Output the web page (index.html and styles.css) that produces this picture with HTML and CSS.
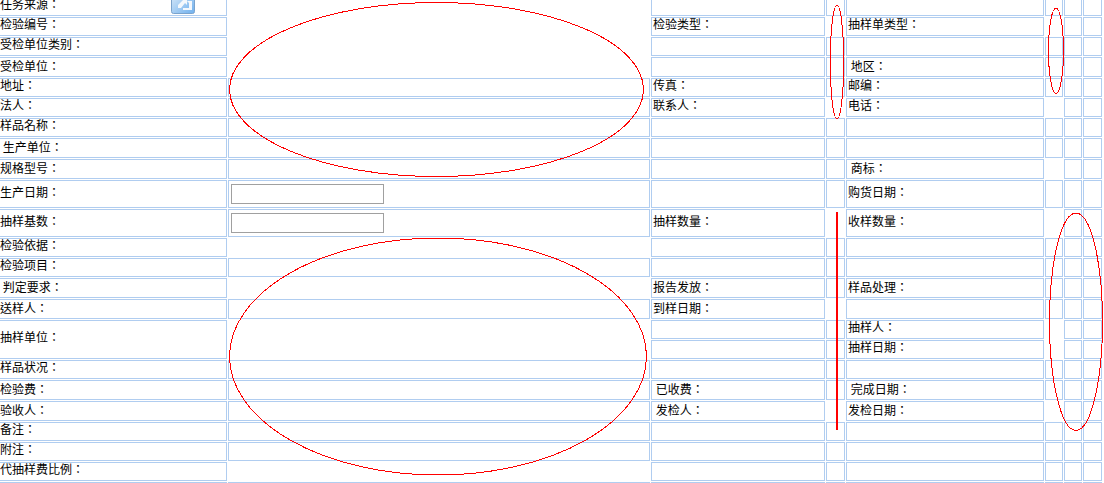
FILE: index.html
```html
<!DOCTYPE html>
<html lang="zh-CN">
<head>
    <meta charset="UTF-8">
    <title>抽样单</title>
    <link rel="stylesheet" href="styles.css">
</head>
<body>
    <table class="form-table">
        <colgroup>
            <col class="col-label">
            <col class="col-value">
            <col class="col-label2">
            <col class="col-narrow">
            <col class="col-label3">
            <col class="col-narrow2">
            <col class="col-narrow2">
            <col class="col-narrow">
        </colgroup>
        <tr class="h19">
            <td class="source-cell">任务来源：
                <svg class="lookup-icon" width="24" height="22" viewBox="0 0 24 22">
                    <defs>
                        <linearGradient id="iconFill" x1="0" y1="0" x2="1" y2="1">
                            <stop offset="0" stop-color="#dcebf8"/>
                            <stop offset="1" stop-color="#6fb0ee"/>
                        </linearGradient>
                    </defs>
                    <rect x="0.5" y="0.5" width="23" height="21" rx="2" fill="url(#iconFill)" stroke="#7ba3cc"/>
                    <path d="M7 13 L12 8 L9 6 L16 6 L16 13 L14 11 L10 16 L7 16 Z" fill="#f4f8fc"/>
                    <path d="M16 9 L21 9 L21 18 L12 18 L12 16 L18 16 L18 11 Z" fill="#f4f8fc"/>
                </svg>
            </td>
            <td class="blank"></td><td></td><td></td><td></td><td></td><td></td><td></td>
        </tr>
        <tr class="h19">
            <td>检验编号：</td><td class="blank"></td><td>检验类型：</td><td class="blank"></td><td>抽样单类型：</td><td class="blank"></td><td></td><td></td>
        </tr>
        <tr class="h19">
            <td>受检单位类别：</td><td class="blank"></td><td></td><td></td><td></td><td></td><td></td><td></td>
        </tr>
        <tr class="h20">
            <td>受检单位：</td><td class="blank"></td><td></td><td></td><td>&nbsp;地区：</td><td></td><td></td><td></td>
        </tr>
        <tr class="h19">
            <td>地址：</td><td></td><td>传真：</td><td></td><td>邮编：</td><td></td><td></td><td></td>
        </tr>
        <tr class="h19">
            <td>法人：</td><td></td><td>联系人：</td><td class="blank"></td><td>电话：</td><td class="blank"></td><td></td><td></td>
        </tr>
        <tr class="h19">
            <td>样品名称：</td><td></td><td></td><td></td><td></td><td></td><td></td><td></td>
        </tr>
        <tr class="h20">
            <td>&nbsp;生产单位：</td><td></td><td></td><td></td><td></td><td></td><td></td><td></td>
        </tr>
        <tr class="h20">
            <td>规格型号：</td><td></td><td></td><td></td><td>&nbsp;商标：</td><td class="blank"></td><td></td><td></td>
        </tr>
        <tr class="h28">
            <td>生产日期：</td><td class="field-cell"><input type="text" class="field"></td><td></td><td></td><td>购货日期：</td><td></td><td></td><td></td>
        </tr>
        <tr class="h28">
            <td>抽样基数：</td><td class="field-cell"><input type="text" class="field"></td><td>抽样数量：</td><td class="blank"></td><td>收样数量：</td><td class="blank"></td><td></td><td></td>
        </tr>
        <tr class="h19">
            <td>检验依据：</td><td class="blank"></td><td></td><td></td><td></td><td></td><td></td><td></td>
        </tr>
        <tr class="h19">
            <td>检验项目：</td><td></td><td></td><td></td><td></td><td></td><td></td><td></td>
        </tr>
        <tr class="h20">
            <td>&nbsp;判定要求：</td><td class="blank"></td><td>报告发放：</td><td></td><td>样品处理：</td><td></td><td></td><td></td>
        </tr>
        <tr class="h20">
            <td>送样人：</td><td></td><td>到样日期：</td><td class="blank"></td><td></td><td></td><td></td><td></td>
        </tr>
        <tr class="h19">
            <td rowspan="2">抽样单位：</td><td rowspan="2" class="blank"></td><td></td><td></td><td>抽样人：</td><td rowspan="2" class="blank"></td><td></td><td></td>
        </tr>
        <tr class="h19">
            <td></td><td></td><td>抽样日期：</td><td></td><td></td>
        </tr>
        <tr class="h19">
            <td>样品状况：</td><td></td><td></td><td></td><td></td><td></td><td></td><td></td>
        </tr>
        <tr class="h20">
            <td>检验费：</td><td></td><td>&nbsp;已收费：</td><td></td><td>&nbsp;完成日期：</td><td></td><td></td><td></td>
        </tr>
        <tr class="h20">
            <td>验收人：</td><td></td><td>&nbsp;发检人：</td><td class="blank"></td><td>发检日期：</td><td class="blank"></td><td></td><td></td>
        </tr>
        <tr class="h19">
            <td>备注：</td><td></td><td></td><td></td><td></td><td></td><td></td><td></td>
        </tr>
        <tr class="h19">
            <td>附注：</td><td></td><td></td><td></td><td></td><td></td><td></td><td></td>
        </tr>
        <tr class="h19">
            <td>代抽样费比例：</td><td class="blank"></td><td></td><td></td><td></td><td></td><td></td><td></td>
        </tr>
        <tr class="h19">
            <td></td><td></td><td></td><td></td><td></td><td></td><td></td><td></td>
        </tr>
    </table>

    <!-- 红色标注 -->
    <svg class="marks" width="1104" height="483" viewBox="0 0 1104 483">
        <ellipse cx="436.5" cy="89.5" rx="207" ry="87"/>
        <ellipse cx="837" cy="62" rx="6.7" ry="57"/>
        <ellipse cx="1056" cy="50.7" rx="7.5" ry="42.7"/>
        <ellipse cx="438" cy="356.5" rx="208.5" ry="118.5"/>
        <ellipse cx="1076" cy="321.7" rx="26.5" ry="108.7"/>
        <line x1="837" y1="212" x2="837" y2="430" class="mark-line"/>
    </svg>
</body>
</html>
```

FILE: styles.css
```css
html, body {
    margin: 0;
    height: 100%;
    background-color: #ffffff;
    overflow: hidden;
}
body {
    position: relative;
    font-family: "Noto Sans CJK TC", "Noto Sans CJK SC", "Liberation Sans", sans-serif;
    font-size: 12px;
    font-feature-settings: "locl" 0;
    color: #000000;
}
.form-table {
    table-layout: fixed;
    width: 1106px;
    margin: -4px 0 0 -3px;
    border-collapse: separate;
    border-spacing: 1px;
}
.col-label { width: 229px; }
.col-value { width: 422px; }
.col-label2 { width: 174px; }
.col-narrow { width: 19px; }
.col-label3 { width: 198px; }
.col-narrow2 { width: 18px; }
.form-table td {
    box-sizing: border-box;
    padding: 0 1px 5px 1px;
    border: 1px solid #b0cdf0;
    line-height: 12px;
    white-space: nowrap;
    vertical-align: middle;
}
.form-table .h20 td {
    padding-bottom: 2px;
}
.form-table .h28 td {
    padding-bottom: 4px;
}
.form-table td.blank {
    border-color: transparent;
}
.form-table td.field-cell {
    padding: 0 0 0 2px;
}
.h19 { height: 19px; }
.h20 { height: 20px; }
.h28 { height: 28px; }
.source-cell {
    position: relative;
}
.lookup-icon {
    position: absolute;
    left: 172px;
    top: -6px;
}
.field {
    display: block;
    box-sizing: border-box;
    width: 153px;
    height: 20px;
    margin: 0;
    padding: 0;
    border: 1px solid #a0a0a0;
    background-color: #ffffff;
}
.marks {
    position: absolute;
    left: 0;
    top: 0;
    pointer-events: none;
}
.marks ellipse {
    fill: none;
    stroke: #ff0000;
    stroke-width: 1;
    shape-rendering: crispEdges;
}
.mark-line {
    stroke: #ff0000;
    stroke-width: 2;
    shape-rendering: crispEdges;
}
```
